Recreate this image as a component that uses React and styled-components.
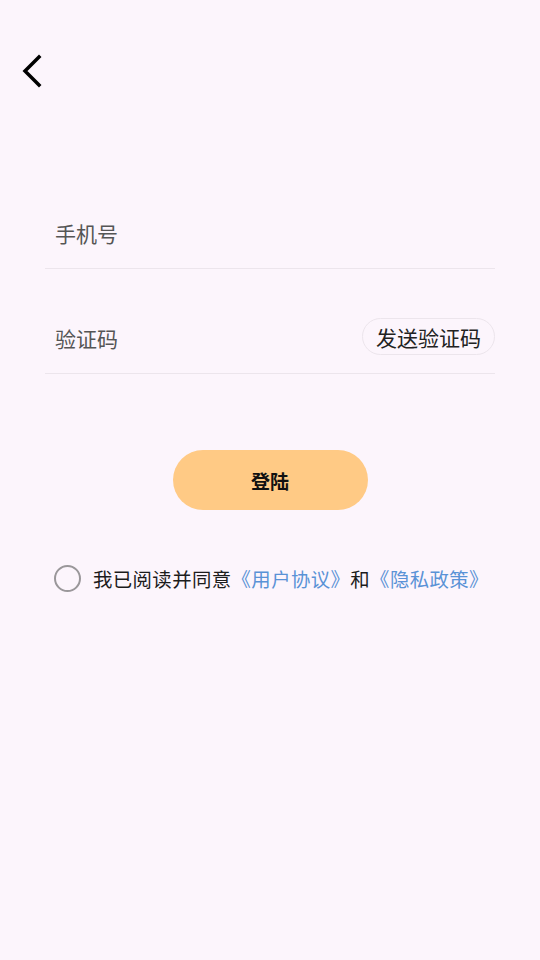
import React, { useState } from "react";
import styled, { createGlobalStyle } from "styled-components";

const Global = createGlobalStyle`
  html, body { margin: 0; padding: 0; background: #fcf5fc; }
  body { font-family: "Noto Sans CJK SC", "Noto Sans", sans-serif; }
  * { box-sizing: border-box; }
`;

const Page = styled.div`
  width: 540px;
  min-height: 960px;
  background: #fcf5fc;
  display: flex;
  flex-direction: column;
`;

const Header = styled.div`
  height: 140px;
  padding: 54px 0 0 20px;
`;

const BackButton = styled.button`
  width: 26px;
  height: 34px;
  padding: 0;
  border: none;
  background: transparent;
  display: flex;
  align-items: center;
  justify-content: center;
  cursor: pointer;
`;

const Form = styled.div`
  display: flex;
  flex-direction: column;
  padding: 62px 45px 0 45px;
`;

const Field = styled.div`
  height: 67px;
  display: flex;
  align-items: center;
  justify-content: space-between;
  padding: 0 0 4px 10px;
  border-bottom: 1px solid #ece5ec;
  margin-top: ${(p) => (p.$first ? "0" : "38px")};
`;

const Input = styled.input`
  flex: 1;
  min-width: 0;
  border: none;
  outline: none;
  background: transparent;
  font-family: "Noto Sans CJK SC", sans-serif;
  font-size: 21px;
  color: #333;
  padding: 0;
  &::placeholder { color: #555; }
`;

const SendButton = styled.button`
  height: 37px;
  padding: 0 13px;
  border: 1px solid #ece5ec;
  border-radius: 19px;
  background: transparent;
  font-family: "Noto Sans CJK SC", sans-serif;
  font-size: 21px;
  color: #222;
  display: flex;
  align-items: center;
  margin-bottom: 3px;
`;

const LoginButton = styled.button`
  align-self: center;
  width: 195px;
  height: 60px;
  margin-top: 76px;
  border: none;
  border-radius: 30px;
  background: #ffca85;
  font-family: "Noto Sans CJK SC", sans-serif;
  font-size: 19px;
  font-weight: 700;
  color: #111;
`;

const Agreement = styled.div`
  display: flex;
  align-items: center;
  margin-top: 53px;
  padding-left: 9px;
  height: 30px;
`;

const Radio = styled.span`
  width: 27px;
  height: 27px;
  border-radius: 50%;
  border: 2.5px solid #9a979a;
  flex: none;
  margin-right: 12px;
`;

const AgreeText = styled.span`
  font-size: 19.4px;
  letter-spacing: 0.4px;
  color: #1c1c1c;
  white-space: nowrap;
`;

const Link = styled.span`
  color: #5a92d6;
`;

export default function App() {
  const [phone, setPhone] = useState("");
  const [code, setCode] = useState("");
  return (
    <Page>
      <Global />
      <Header>
        <BackButton aria-label="返回">
          <svg width="26" height="34" viewBox="0 0 26 34">
            <path d="M19 3 L5 17 L19 31" fill="none" stroke="#000" strokeWidth="3.5" strokeLinecap="square" />
          </svg>
        </BackButton>
      </Header>
      <Form>
        <Field $first>
          <Input placeholder="手机号" value={phone} onChange={(e) => setPhone(e.target.value)} />
        </Field>
        <Field>
          <Input placeholder="验证码" value={code} onChange={(e) => setCode(e.target.value)} />
          <SendButton>发送验证码</SendButton>
        </Field>
        <LoginButton>登陆</LoginButton>
        <Agreement>
          <Radio />
          <AgreeText>
            我已阅读并同意<Link>《用户协议》</Link>和<Link>《隐私政策》</Link>
          </AgreeText>
        </Agreement>
      </Form>
    </Page>
  );
}
